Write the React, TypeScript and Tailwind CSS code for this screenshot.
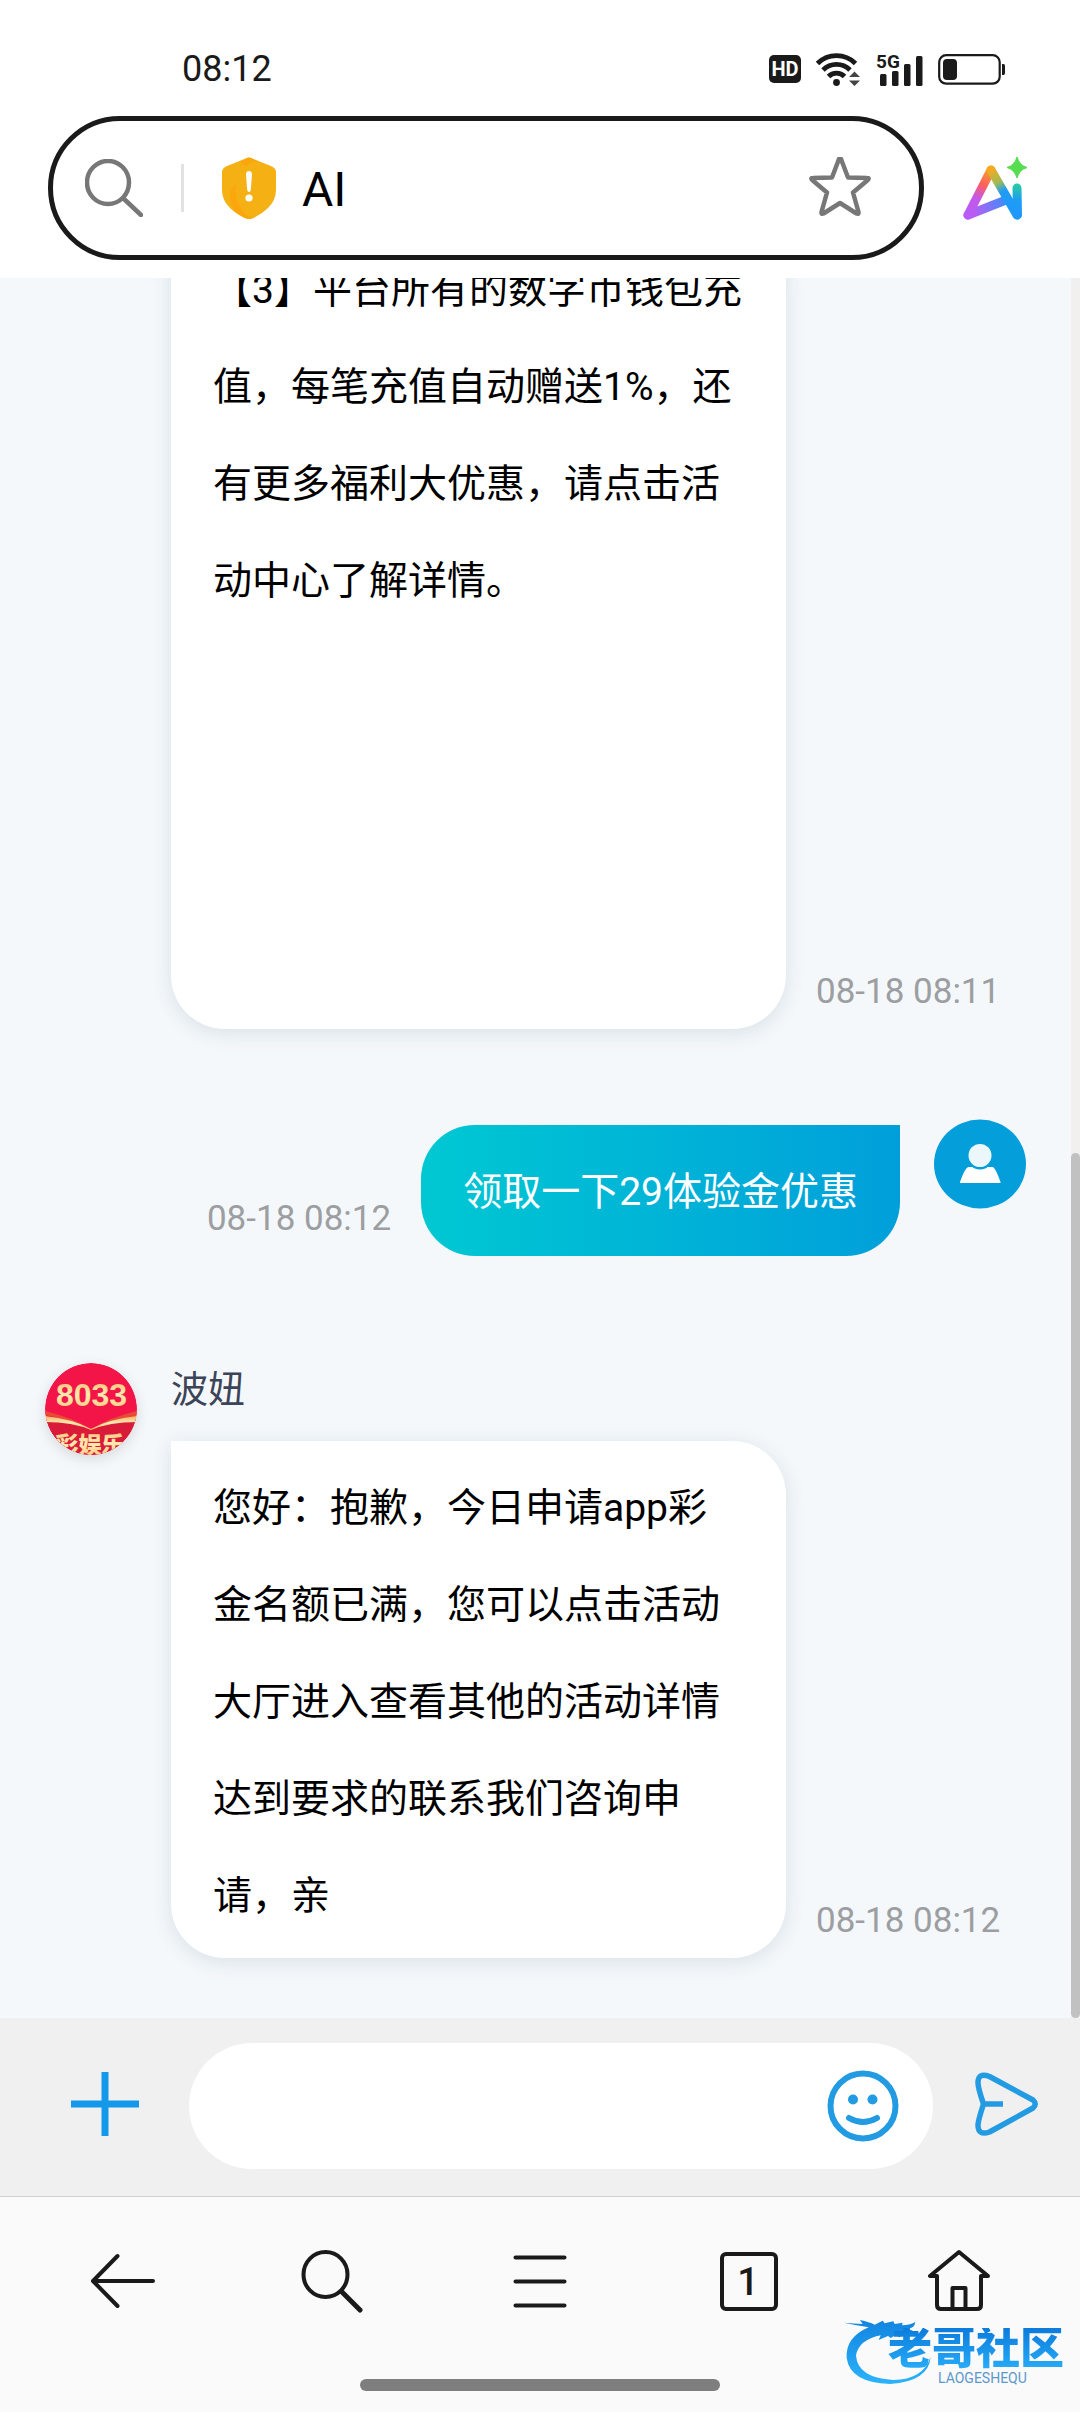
import type { ReactNode } from "react";

function StatusBar() {
  return (
    <div className="flex h-[116px] items-center justify-between pt-[22px] pr-[74px] pl-[182px] text-[#1a1a1a]">
      <time className="text-[36px] leading-10">08:12</time>
      <div className="flex items-center gap-[15px]">
        <span className="flex h-7 w-8 items-center justify-center rounded-[5px] bg-[#1a1a1a] text-[20px] leading-6 font-bold text-white">
          HD
        </span>
        <svg className="h-[34px] w-11" viewBox="0 0 44 34" fill="none" aria-label="Wi-Fi">
          <g stroke="#1a1a1a" strokeWidth="4.8">
            <path d="M1.500 11.500a27 27 0 0 1 38 0" />
            <path d="M7 18a19 19 0 0 1 27 0" />
            <path d="M12.500 24.500a11 11 0 0 1 16 0" />
          </g>
          <circle cx="20.500" cy="30.500" r="3.400" fill="#1a1a1a" />
          <path d="M38.500 19.500l5.500 5.500h-11zM38.500 34l-5.500-5.500h11z" fill="#444" />
        </svg>
        <svg className="h-[38px] w-[48px]" viewBox="0 -4 48 38" aria-label="5G" fill="#1a1a1a">
          <text x="1" y="14" fontSize="19" fontWeight="700" fontFamily="Roboto, sans-serif">
            5G
          </text>
          <rect x="5" y="20" width="6.500" height="12" rx="1.500" />
          <rect x="17" y="17" width="6.500" height="15" rx="1.500" />
          <rect x="29" y="10" width="6.500" height="22" rx="1.500" />
          <rect x="41" y="2" width="6.500" height="30" rx="1.500" />
        </svg>
        <svg className="h-[34px] w-[68px]" viewBox="0 0 68 34" fill="none" aria-label="Battery">
          <rect x="1.200" y="3.200" width="60.500" height="28.500" rx="7" stroke="#1a1a1a" strokeWidth="2.200" />
          <rect x="5" y="7" width="14" height="21" rx="4" fill="#1a1a1a" />
          <path d="M64 12h1.500q1.500 0 1.500 2v7q0 2-1.500 2H64z" fill="#1a1a1a" />
        </svg>
      </div>
    </div>
  );
}

function AddressBar() {
  return (
    <div className="flex items-center pr-[50px] pb-[18px] pl-12">
      <div className="flex h-36 min-w-0 flex-1 items-center rounded-full border-[5px] border-[#1a1a1a] bg-white pr-12 pl-8">
        <svg className="h-[58px] w-[58px] shrink-0" viewBox="0 0 58 58" fill="none" stroke="#777" strokeWidth="4.500" strokeLinecap="round" aria-hidden="true">
          <ellipse cx="23" cy="23.500" rx="21" ry="21.500" />
          <path d="M38.500 39.500L56 56" />
        </svg>
        <span className="mx-[38px] h-12 w-[3px] shrink-0 bg-[#e2e2e2]" />
        <svg className="h-[62px] w-[54px] shrink-0" viewBox="0 0 54 62" aria-hidden="true">
          <path d="M25 1q2-1 4 0l20 8q5 2 5 6v18q0 10-8 18-7 7-17 11-2 1-4 0-10-4-17-11Q0 43 0 33V15q0-4 5-6z" fill="#f5b014" />
          <path d="M14 27C6 33 6 45 13 54q7 6 14 8l2-1C19 55 12 43 14 27zM17 5l8-4q2-1 4 0l10 5q-10-4-15 4-4-5-7-5z" fill="#fba60b" />
          <path d="M24 17.500q0-3.500 3-3.500t3 3.500l-1.200 15.500q-.3 2-1.800 2t-1.800-2z" fill="#fff" />
          <circle cx="27" cy="41" r="3.600" fill="#fff" />
        </svg>
        <input
          aria-label="Address"
          defaultValue="AI"
          className="ml-[26px] min-w-0 flex-1 bg-transparent pt-1 text-[48px] leading-[60px] text-black outline-none"
        />
        <button aria-label="Bookmark" className="shrink-0">
          <svg className="h-[62px] w-[62px]" viewBox="0 2 62 62" fill="none" stroke="#777" strokeWidth="4.500" strokeLinejoin="round">
            <path d="M30 4q1-2 2 0l7 18.500 19 .5q3 0 .5 2.200L44 37.500 49.500 57q.5 2.500-2 1.500L31 48 14.500 58.500q-2.500 1-2-1.500L18 37.500 3.500 25.200Q1 23 4 23l19-.5z" />
          </svg>
        </button>
      </div>
      <button aria-label="AI assistant" className="ml-[38px] shrink-0">
        <svg className="h-16 w-[68px]" viewBox="0 0 68 64" fill="none">
          <defs>
            <linearGradient id="aiLeft" x1="29" y1="12" x2="8" y2="58" gradientUnits="userSpaceOnUse">
              <stop stopColor="#f9a71f" />
              <stop offset=".38" stopColor="#fb5f62" />
              <stop offset=".65" stopColor="#c558ea" />
              <stop offset="1" stopColor="#b75cf5" />
            </linearGradient>
            <linearGradient id="aiRight" x1="30" y1="12" x2="56" y2="58" gradientUnits="userSpaceOnUse">
              <stop stopColor="#f7a920" />
              <stop offset=".3" stopColor="#9fbb55" />
              <stop offset=".48" stopColor="#209cf5" />
              <stop offset="1" stopColor="#1e98fb" />
            </linearGradient>
            <linearGradient id="aiBar" x1="8" y1="58" x2="44" y2="44" gradientUnits="userSpaceOnUse">
              <stop stopColor="#c558f2" />
              <stop offset="1" stopColor="#3f8cfb" />
            </linearGradient>
            <linearGradient id="aiStem" x1="56" y1="30" x2="56" y2="58" gradientUnits="userSpaceOnUse">
              <stop stopColor="#27c9a8" />
              <stop offset=".5" stopColor="#1e9df5" />
              <stop offset="1" stopColor="#1e98fb" />
            </linearGradient>
          </defs>
          <g strokeWidth="9" strokeLinecap="round" strokeLinejoin="round">
            <path d="M6 59L44 44" stroke="url(#aiBar)" />
            <path d="M6 59L29 14" stroke="url(#aiLeft)" />
            <path d="M29 14L55 59" stroke="url(#aiRight)" />
            <path d="M55.500 59L55 32" stroke="url(#aiStem)" />
          </g>
          <path d="M55 1q2.500 8.500 10 10.500-7.500 2-10 10.500-2.500-8.500-10-10.500 7.500-2 10-10.500z" fill="#57dd50" stroke="#57dd50" strokeLinejoin="round" />
        </svg>
      </button>
    </div>
  );
}

function Stamp({ children }: { children: ReactNode }) {
  return (
    <time className="mb-3 text-[35px] leading-[50px] whitespace-nowrap text-[#9c9ea1]">
      {children}
    </time>
  );
}

function AgentAvatar() {
  return (
    <svg className="h-[92px] w-[92px] shrink-0 rounded-full shadow-[0_4px_14px_rgba(0,0,0,0.12)]" viewBox="0 0 92 92" role="img" aria-label="8033 彩娱乐">
      <defs>
        <clipPath id="agentClip">
          <circle cx="46" cy="46" r="46" />
        </clipPath>
        <linearGradient id="gold" x1="0" y1="0" x2="0" y2="1">
          <stop stopColor="#f7b566" />
          <stop offset=".5" stopColor="#ffeab2" />
          <stop offset="1" stopColor="#f9c272" />
        </linearGradient>
      </defs>
      <g clipPath="url(#agentClip)">
        <rect width="92" height="92" fill="#f31547" />
        <path d="M0 0h22Q12 8 6 22H0z" fill="#f8836f" />
        <path d="M0 56q24 3 46 11 22-8 46-11v36H0z" fill="#d91a38" />
        <path d="M0 48q26 6 46 18Q66 54 92 48v5Q66 58 46 67 26 57 0 52z" fill="#e94a35" />
        <path d="M0 53q28 3 46 13 18-10 46-13v6q-28 0-46 8Q28 59 0 59z" fill="url(#gold)" />
        <text x="46.500" y="43" textAnchor="middle" fontSize="32" fontWeight="700" fontFamily="Liberation Sans, sans-serif" fill="url(#gold)">
          8033
        </text>
        <text x="45" y="90" textAnchor="middle" fontSize="23" fontWeight="900" fontFamily="Noto Sans CJK SC, sans-serif" fill="url(#gold)">
          彩娱乐
        </text>
      </g>
    </svg>
  );
}

function UserAvatar() {
  return (
    <svg className="h-[90px] w-[92px] shrink-0" viewBox="0 0 92 90" role="img" aria-label="User">
      <ellipse cx="46" cy="45" rx="46" ry="44.500" fill="#049fda" />
      <path d="M34 48h25q3 2 7.500 15v1H26v-1q4.500-13 8-15z" fill="#fff" />
      <circle cx="46" cy="37" r="13.500" fill="#049fda" />
      <circle cx="46" cy="36.500" r="11.500" fill="#ecf7fc" />
    </svg>
  );
}

function Chat() {
  return (
    <main className="flex min-h-0 flex-1 bg-[#f4f8fb]">
      <div className="flex min-w-0 flex-1 flex-col justify-end overflow-hidden px-[45px] pb-[60px] text-[39px] leading-[97px]">
        <div className="ml-[126px] flex shrink-0 items-end">
          <p className="w-[615px] rounded-[54px] rounded-tl-none bg-white px-[42px] pt-4 pb-[399px] text-black shadow-[0_4px_20px_rgba(30,60,90,0.12)]">
            【3】平台所有的数字币钱包充值，每笔充值自动赠送1%，还有更多福利大优惠，请点击活动中心了解详情。
          </p>
          <div className="ml-[30px] flex">
            <Stamp>08-18 08:11</Stamp>
          </div>
        </div>

        <div className="mt-[90px] flex shrink-0 items-start justify-end">
          <div className="mt-[6px] mr-[34px] flex items-end">
            <Stamp>08-18 08:12</Stamp>
            <p className="ml-[30px] rounded-[54px] rounded-tr-none bg-linear-to-r from-[#00c8d2] to-[#009fda] px-[42px] pt-[19px] pb-[15px] text-white">
              领取一下29体验金优惠
            </p>
          </div>
          <UserAvatar />
        </div>

        <div className="mt-[107px] flex shrink-0 items-start">
          <AgentAvatar />
          <div className="ml-[34px]">
            <h2 className="mb-6 pt-[2px] text-[37px] leading-[52px] text-[#3c4458]">波妞</h2>
            <div className="flex items-end">
              <p className="w-[615px] rounded-[54px] rounded-tl-none bg-white px-[42px] pt-[19px] pb-[13px] text-black shadow-[0_4px_20px_rgba(30,60,90,0.12)]">
                您好：抱歉，今日申请app彩金名额已满，您可以点击活动大厅进入查看其他的活动详情达到要求的联系我们咨询申请，亲
              </p>
              <div className="ml-[30px] flex">
                <Stamp>08-18 08:12</Stamp>
              </div>
            </div>
          </div>
        </div>
      </div>
      <div className="flex w-[9px] flex-col justify-end bg-[#f1f0ef]">
        <div className="h-[49.7%] rounded-full bg-[#c1c1c1]" />
      </div>
    </main>
  );
}

function Composer() {
  return (
    <form className="flex items-center bg-[#f0f0f0] pt-[25px] pr-[42px] pb-[27px] pl-[71px]">
      <button type="button" aria-label="Add attachment" className="mr-[50px] shrink-0">
        <svg className="h-[68px] w-[68px]" viewBox="0 0 68 68" stroke="#1398ea" strokeWidth="7">
          <path d="M0 32h68M34 0v64" />
        </svg>
      </button>
      <div className="flex h-[126px] min-w-0 flex-1 items-center rounded-full bg-white pr-[34px] pl-12">
        <input aria-label="Message" className="min-w-0 flex-1 bg-transparent text-[39px] outline-none" />
        <button type="button" aria-label="Emoji" className="shrink-0">
          <svg className="h-[72px] w-[72px]" viewBox="0 0 72 72" fill="none" stroke="#229be3" strokeWidth="6">
            <circle cx="36" cy="36" r="32.500" />
            <path d="M22 48q14 8 28 0" strokeLinecap="round" />
            <circle cx="26" cy="29.500" r="5" fill="#229be3" stroke="none" />
            <circle cx="45.500" cy="29.500" r="5" fill="#229be3" stroke="none" />
          </svg>
        </button>
      </div>
      <button type="submit" aria-label="Send" className="ml-[42px] shrink-0">
        <svg className="h-[68px] w-[63px]" viewBox="0 0 63 68" fill="none" stroke="#229be3" strokeWidth="5.500" strokeLinejoin="round">
          <path d="M14.500 4.500L58 28q4.500 4 0 8L14.500 60Q3 64 3 53q0-4 5.500-21Q3 16 3 11 3 0 14.500 4.500zM8.500 32H28" />
        </svg>
      </button>
    </form>
  );
}

function NavButton({ label, children }: { label: string; children: ReactNode }) {
  return (
    <button aria-label={label} className="flex h-16 items-center justify-center">
      <svg className="h-16 w-[66px]" viewBox="0 0 66 64" fill="none" stroke="#1a1a1a" strokeWidth="4" strokeLinecap="round" strokeLinejoin="round">
        {children}
      </svg>
    </button>
  );
}

function Watermark() {
  return (
    <div className="pointer-events-none absolute right-4 bottom-6 flex h-[74px]" aria-label="老哥社区">
      <svg className="h-[74px] w-[92px] shrink-0" viewBox="60 40 276 222" aria-hidden="true">
        <defs>
          <linearGradient id="dragon" x1="0" y1="0" x2="0" y2="1">
            <stop stopColor="#1284e0" />
            <stop offset="1" stopColor="#2bb3fb" />
          </linearGradient>
        </defs>
        <path
          d="M66 66q30 2 56 4l-8-12q28 6 44 14l24-12 6 8 26-6 4 8 24-4-2 8q22 0 40-10-2 18-22 20l14 6-4 14-20-4-16 10-12-6-14 8-8-6-28 12 6-14q-66 14-74 60 4 68 112 74 90-2 112-70-6 74-122 82Q84 246 74 172q-4-62 66-92-36-6-74-14z"
          fill="url(#dragon)"
        />
      </svg>
      <div className="-ml-[46px] pt-[14px]">
        <p className="bg-linear-to-b from-[#0c7bdc] to-[#28adf8] bg-clip-text text-[44px] leading-[42px] font-black text-transparent">
          老哥社区
        </p>
        <p className="pl-[50px] text-[14px] leading-4 text-[#5b97cd]">LAOGESHEQU</p>
      </div>
    </div>
  );
}

function BottomNav() {
  return (
    <nav className="relative border-t border-[#cfcfcf] bg-[#fafafa] pt-[52px] pb-[21px]">
      <div className="grid grid-cols-5 px-[18px]">
        <NavButton label="Back">
          <path d="M28.500 7L4 32l24.500 25M4 32h60" />
        </NavButton>
        <NavButton label="Search">
          <ellipse cx="27.500" cy="25.500" rx="22" ry="22.500" />
          <path d="M44 43l18 18" strokeWidth="5" />
        </NavButton>
        <NavButton label="Menu">
          <path d="M8.500 8.500h49M8.500 32.500h49M8.500 56.500h49" />
        </NavButton>
        <NavButton label="Tabs">
          <rect x="6" y="5" width="54" height="55" rx="4" />
          <text x="32" y="46" textAnchor="middle" fontSize="38" fontWeight="500" fontFamily="Roboto, sans-serif" fill="#1a1a1a" stroke="none">
            1
          </text>
        </NavButton>
        <NavButton label="Home">
          <path d="M34 3L5 27h7v29q0 4 4 4h36q4 0 4-4V27h7zM27.500 60V39h13v21" />
        </NavButton>
      </div>
      <div className="mx-auto mt-[66px] h-3 w-1/3 rounded-full bg-[#7e7e7e]" />
      <Watermark />
    </nav>
  );
}

export default function App() {
  return (
    <div className="flex h-screen flex-col overflow-hidden bg-white font-[Roboto,'Noto_Sans_CJK_SC',sans-serif]">
      <header>
        <StatusBar />
        <AddressBar />
      </header>
      <Chat />
      <Composer />
      <BottomNav />
    </div>
  );
}
